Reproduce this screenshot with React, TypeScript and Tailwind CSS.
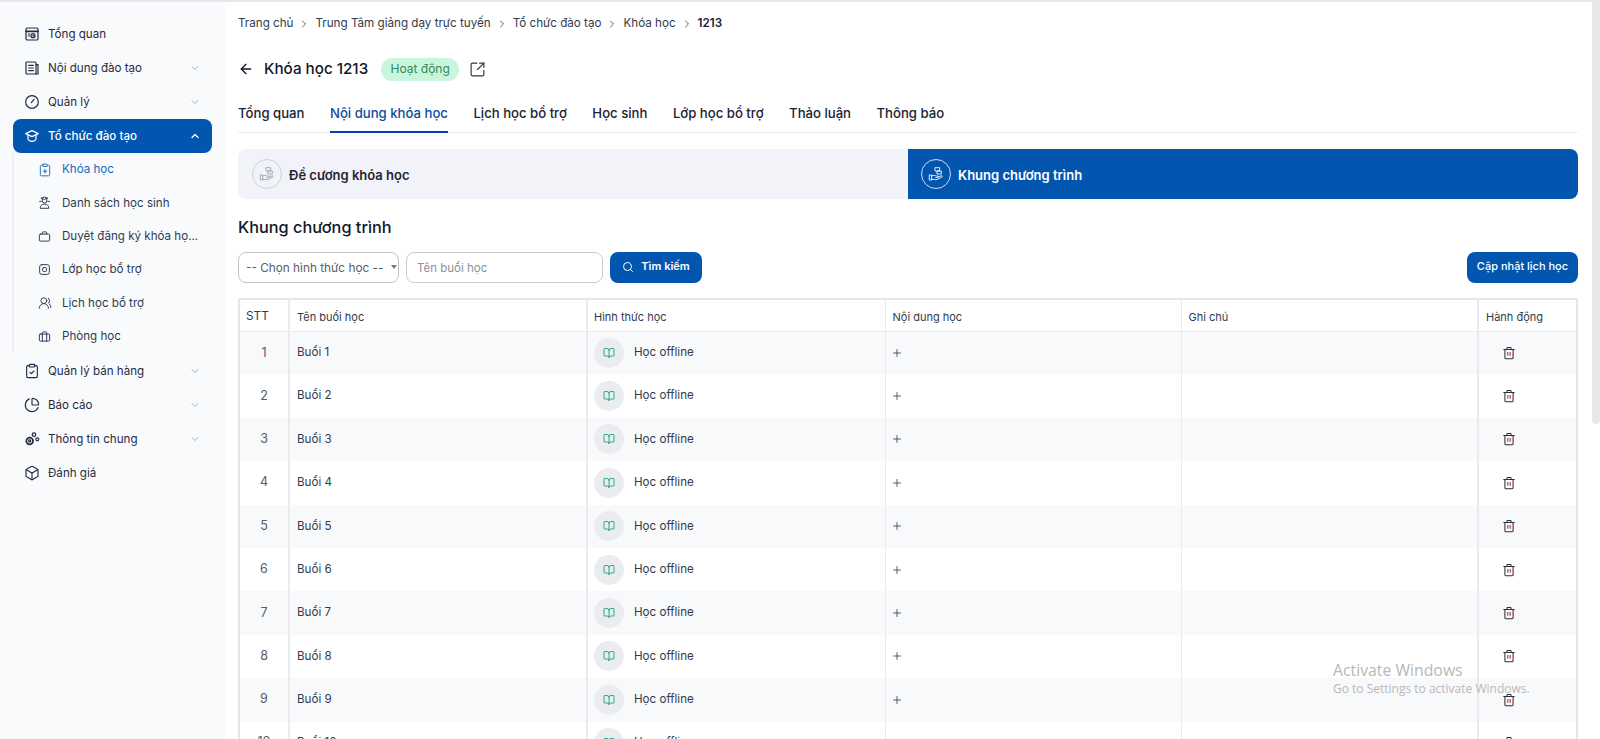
import {
    ArrowLeft,
    BookOpen,
    Box,
    ChartPie,
    ChevronDown,
    ChevronRight,
    ChevronUp,
    ClipboardCheck,
    ClipboardPlus,
    Plus,
    Search,
    SquareArrowOutUpRight,
    UsersRound,
} from 'lucide-react'
import type { ReactNode } from 'react'

// Hand-drawn icons (no match in lucide)
const Svg = ({ children, className }: { children: ReactNode; className: string }) => (
    <svg viewBox="0 0 24 24" fill="none" stroke="currentColor" strokeWidth="1.8" strokeLinecap="round" strokeLinejoin="round" className={className}>
        {children}
    </svg>
)

const OverviewIcon = () => (
    <Svg className="h-[16px] w-[16px]">
        <rect x="3" y="3" width="18" height="18" rx="2" />
        <path d="M3 8h18" strokeWidth="2.6" />
        <circle cx="13.5" cy="14.5" r="3" />
        <path d="M6.5 12h2M6.5 15h2M13.5 13.5v1l1 .6" />
    </Svg>
)
const ContentIcon = () => (
    <Svg className="h-[16px] w-[16px]">
        <rect x="3" y="3" width="15" height="18" rx="1.5" />
        <path d="M18 7h3v14h-3M7 8h7M7 12h7M7 16h7" />
    </Svg>
)
const GaugeIcon = () => (
    <Svg className="h-[16px] w-[16px]">
        <circle cx="12" cy="12" r="9.5" />
        <path d="M11 13l4-5" />
    </Svg>
)
const CapIcon = () => (
    <Svg className="h-[16px] w-[16px]">
        <path d="M12 4L2.5 8.5 12 13l9.5-4.5z" />
        <path d="M6 11v5c0 2 3 4 6 4s6-2 6-4v-5" />
    </Svg>
)
const StudentIcon = () => (
    <Svg className="h-[13px] w-[13px]">
        <path d="M6 4l6-2 6 2-6 2z" />
        <path d="M8 6v3a4 4 0 008 0V6" />
        <path d="M4 22c0-4 3-7 8-7s8 3 8 7z" />
        <path d="M3 10h3M18 10h3" />
    </Svg>
)
const BagIcon = () => (
    <Svg className="h-[13px] w-[13px]">
        <rect x="2.5" y="7.5" width="19" height="13" rx="2" />
        <path d="M8 7.5V5a1.5 1.5 0 011.5-1.5h5A1.5 1.5 0 0116 5v2.5" />
    </Svg>
)
const ClassIcon = () => (
    <Svg className="h-[13px] w-[13px]">
        <rect x="3" y="3" width="18" height="18" rx="4" />
        <rect x="8.5" y="8.5" width="7" height="7" rx="1.5" />
    </Svg>
)
const RoomIcon = () => (
    <Svg className="h-[13px] w-[13px]">
        <rect x="2.5" y="7.5" width="19" height="13" rx="1.5" />
        <path d="M8 20.5v-13M16 20.5v-13M8 7.5V5a1.5 1.5 0 011.5-1.5h5A1.5 1.5 0 0116 5v2.5" />
    </Svg>
)
const GearsIcon = () => (
    <Svg className="h-[16px] w-[16px]">
        <circle cx="8.5" cy="15" r="5" strokeDasharray="2.2 1" strokeWidth="2.6" />
        <circle cx="8.5" cy="15" r="1.6" />
        <circle cx="15" cy="5.5" r="2.6" />
        <circle cx="20" cy="12.5" r="2.2" />
    </Svg>
)
const HandBoxIcon = () => (
    <svg viewBox="0 0 24 24" fill="none" stroke="currentColor" strokeWidth="1.3" strokeLinecap="round" strokeLinejoin="round" className="h-full w-full">
        <rect x="11" y="2.5" width="6.5" height="5" />
        <rect x="14" y="7.5" width="6" height="4.5" />
        <path d="M2.5 13.5h3V21h-3zM5.5 15c3-1.8 5-1 7 0h2c1.5 0 1.5 2 0 2h-3M15 16.5l4.5-1.8c1.8-.6 2.5 1.1 1 2l-7 3.5c-2 .6-5 0-8-.5" />
    </svg>
)
const TrashIcon = () => (
    <svg viewBox="0 0 24 24" fill="none" strokeWidth="1.8" strokeLinecap="round" strokeLinejoin="round" className="h-[14px] w-[14px] stroke-[#2d2f3a]">
        <path d="M3 6h18M8.5 6V3.5a1 1 0 011-1h5a1 1 0 011 1V6" />
        <path d="M5 6v14a2 2 0 002 2h10a2 2 0 002-2V6" />
        <path d="M10 11v5" className="stroke-[#b4232f]" />
        <path d="M14 11v5" className="stroke-[#b4232f]" />
    </svg>
)

const mainMenuTop = [
    { label: 'Tổng quan', icon: <OverviewIcon />, arrow: false },
    { label: 'Nội dung đào tạo', icon: <ContentIcon />, arrow: true },
    { label: 'Quản lý', icon: <GaugeIcon />, arrow: true },
]

const subMenu = [
    { label: 'Khóa học', icon: <ClipboardPlus className="h-[14px] w-[14px]" strokeWidth={1.6} />, active: true },
    { label: 'Danh sách học sinh', icon: <StudentIcon /> },
    { label: 'Duyệt đăng ký khóa họ...', icon: <BagIcon /> },
    { label: 'Lớp học bổ trợ', icon: <ClassIcon /> },
    { label: 'Lịch học bổ trợ', icon: <UsersRound className="h-[14px] w-[14px]" strokeWidth={1.6} /> },
    { label: 'Phòng học', icon: <RoomIcon /> },
]

const mainMenuBottom = [
    { label: 'Quản lý bán hàng', icon: <ClipboardCheck className="h-[16px] w-[16px]" strokeWidth={1.7} />, arrow: true },
    { label: 'Báo cáo', icon: <ChartPie className="h-[16px] w-[16px]" strokeWidth={1.7} />, arrow: true },
    { label: 'Thông tin chung', icon: <GearsIcon />, arrow: true },
    { label: 'Đánh giá', icon: <Box className="h-[16px] w-[16px]" strokeWidth={1.7} />, arrow: false },
]

const crumbs = ['Trang chủ', 'Trung Tâm giảng dạy trực tuyến', 'Tổ chức đào tạo', 'Khóa học']
const tabs = ['Tổng quan', 'Nội dung khóa học', 'Lịch học bổ trợ', 'Học sinh', 'Lớp học bổ trợ', 'Thảo luận', 'Thông báo']
const sessions = [1, 2, 3, 4, 5, 6, 7, 8, 9, 10]

function MenuRow({ label, icon, arrow }: { label: string; icon: ReactNode; arrow: boolean }) {
    return (
        <div className="flex h-[34px] items-center pl-[24px] pr-[24px] text-[#1f2a44]">
            <span className="flex w-[24px] shrink-0">{icon}</span>
            <span className="flex-1 truncate pt-[2px]">{label}</span>
            {arrow && <ChevronDown className="h-3 w-3 text-[#a8afbb]" />}
        </div>
    )
}

export default function App() {
    return (
        <div className="flex h-[739px] overflow-hidden border-t-2 border-[#e6e7eb] bg-white font-['Inter',sans-serif] text-[12px]">
            {/* Sidebar */}
            <aside className="w-[225px] shrink-0 bg-[#f9fafc] pt-[15px] text-[11.6px]">
                {mainMenuTop.map((item) => (
                    <MenuRow key={item.label} {...item} />
                ))}
                <div className="mx-[13px] flex h-[34px] w-[199px] items-center rounded-lg bg-[#0256b0] pl-[11px] pr-[11px] font-medium text-white">
                    <span className="flex w-[24px] shrink-0"><CapIcon /></span>
                    <span className="flex-1 pt-[2px]">Tổ chức đào tạo</span>
                    <ChevronUp className="h-3 w-3" strokeWidth={2.5} />
                </div>
                <div className="ml-[12px] w-[200px] border-l-2 border-[#eceef1]">
                    {subMenu.map((item) => (
                        <div
                            key={item.label}
                            className={`flex h-[33.3px] items-center pl-[24px] ${item.active ? 'text-[#1769b8]' : 'text-[#2f3a52]'}`}
                        >
                            <span className="flex w-[24px] shrink-0">{item.icon}</span>
                            <span className="truncate pt-[1px]">{item.label}</span>
                        </div>
                    ))}
                </div>
                <div className="pt-[1px]">
                    {mainMenuBottom.map((item) => (
                        <MenuRow key={item.label} {...item} />
                    ))}
                </div>
            </aside>

            {/* Main */}
            <main className="min-w-0 flex-1 pl-[13px] pr-[14px] text-[#1a2233]">
                <nav className="mt-[14px] flex h-4 items-center text-[11.65px] text-[#333b4d]">
                    {crumbs.map((crumb) => (
                        <span key={crumb} className="flex items-center">
                            {crumb}
                            <ChevronRight className="mx-[5px] h-3 w-3" strokeWidth={1.6} />
                        </span>
                    ))}
                    <span className="font-semibold text-[#1a2233]">1213</span>
                </nav>

                <div className="mt-[25px] flex h-[24px] items-center">
                    <ArrowLeft className="h-[16px] w-[16px] text-[#111827]" strokeWidth={2} />
                    <h1 className="ml-[10px] text-[15.2px] font-medium text-[#111827]">Khóa học 1213</h1>
                    <span className="ml-[13px] flex h-[23px] w-[78px] items-center justify-center rounded-full bg-[#c9f5da] text-[12px] text-[#2f8a5d]">Hoạt động</span>
                    <SquareArrowOutUpRight className="ml-[10px] h-[17px] w-[17px] text-[#2d3344]" strokeWidth={1.6} />
                </div>

                <div className="mt-[18px] flex h-[34px] gap-[25.5px] border-b border-[#eceef1] text-[13.15px] font-medium">
                    {tabs.map((tab, i) => (
                        <div
                            key={tab}
                            className={`-mb-px pt-[5px] ${i === 1 ? 'border-b-2 border-[#0a3fa8] text-[#0f4c9c]' : 'text-[#1a2233]'}`}
                        >
                            {tab}
                        </div>
                    ))}
                </div>

                <div className="mt-[16px] grid h-[50px] grid-cols-2 text-[13px] font-semibold">
                    <div className="flex items-center gap-[7px] rounded-l-lg bg-[#f1f3f8] pl-[14px] text-[#1f2433]">
                        <span className="flex h-[30px] w-[30px] items-center justify-center rounded-full border border-[#cdd1d9] p-[6px] text-[#9aa0ad]"><HandBoxIcon /></span>
                        <span className="pt-[3px]">Đề cương khóa học</span>
                    </div>
                    <div className="flex items-center gap-[7px] rounded-r-lg bg-[#0256b0] pl-[13px] text-white">
                        <span className="flex h-[30px] w-[30px] items-center justify-center rounded-full border border-[#cfdcef] p-[6px]"><HandBoxIcon /></span>
                        <span className="pt-[3px]">Khung chương trình</span>
                    </div>
                </div>

                <h2 className="mt-[18px] text-[16.3px] font-medium leading-[20px] text-[#111827]">Khung chương trình</h2>

                <div className="mt-[15px] flex h-[31px] items-stretch gap-[7px]">
                    <div className="relative flex w-[161px] items-center rounded-lg border border-[#bfc3ca] pl-[7px] pt-[2px] text-[11.8px] text-[#555c6b]">
                        -- Chọn hình thức học --
                        <span className="absolute right-[1px] top-[12px] h-0 w-0 border-x-[3.5px] border-t-[4px] border-x-transparent border-t-[#777]" />
                    </div>
                    <input
                        placeholder="Tên buổi học"
                        className="w-[197px] rounded-lg border border-[#c9ccd2] px-[10px] pt-[2px] text-[11.5px] outline-none placeholder:text-[#8a909b]"
                    />
                    <button className="flex w-[92px] items-center justify-center gap-[7px] rounded-lg bg-[#0256b0] pb-[2px] text-[11px] font-semibold text-white">
                        <Search className="h-[12px] w-[12px]" strokeWidth={2} />
                        Tìm kiếm
                    </button>
                    <button className="ml-auto w-[111px] rounded-lg bg-[#0256b0] pb-[2px] text-[11px] font-medium text-white">Cập nhật lịch học</button>
                </div>

                <table className="mt-[15px] w-[1340px] table-fixed border-collapse border-2 border-[#e4e6ea] text-[11.6px] text-[#333b4d]">
                    <colgroup>
                        <col className="w-[50px]" />
                        <col className="w-[298px]" />
                        <col className="w-[298px]" />
                        <col className="w-[296px]" />
                        <col className="w-[297px]" />
                        <col />
                    </colgroup>
                    <thead>
                        <tr className="h-[32px] border-b border-[#e9ebef] text-left text-[11px]">
                            <th className="border-r-2 border-[#e9ebef] pl-[6px] pt-[3px] text-[11.8px] font-normal">STT</th>
                            <th className="border-r-2 border-[#e9ebef] pl-[7px] pt-[3px] font-normal">Tên buổi học</th>
                            <th className="border-r border-[#e9ebef] pl-[6px] pt-[3px] font-normal">Hình thức học</th>
                            <th className="border-r border-[#e9ebef] pl-[7px] pt-[3px] font-normal">Nội dung học</th>
                            <th className="border-r-2 border-[#e9ebef] pl-[7px] pt-[3px] font-normal">Ghi chú</th>
                            <th className="pl-[7px] pt-[3px] font-normal">Hành động</th>
                        </tr>
                    </thead>
                    <tbody>
                        {sessions.map((n) => (
                            <tr key={n} className={`h-[43.4px] ${n % 2 === 1 ? 'bg-[#f8f9fb]' : 'bg-white'}`}>
                                <td className="border-r-2 border-[#e9ebef] text-center align-middle text-[12.5px] text-[#555c6b]">{n}</td>
                                <td className="border-r-2 border-[#e9ebef] pl-[7px]">Buổi {n}</td>
                                <td className="border-r border-[#e9ebef] pl-[6px]">
                                    <div className="flex items-center gap-[10px]">
                                        <span className="flex h-[30px] w-[30px] items-center justify-center rounded-full bg-[#eaecef]">
                                            <BookOpen className="h-[12px] w-[12px] text-[#1aa37f]" strokeWidth={1.8} />
                                        </span>
                                        <span>Học offline</span>
                                    </div>
                                </td>
                                <td className="border-r border-[#e9ebef] pl-[5px]">
                                    <Plus className="h-[12px] w-[12px] text-[#3c4353]" strokeWidth={1.7} />
                                </td>
                                <td className="border-r-2 border-[#e9ebef]" />
                                <td className="pl-[23px]"><TrashIcon /></td>
                            </tr>
                        ))}
                    </tbody>
                </table>
            </main>

            {/* Scrollbar */}
            <div className="w-2 shrink-0 bg-white">
                <div className="h-[422px] rounded-b-md bg-[#e8e8e8]" />
            </div>

            {/* Windows watermark */}
            <div className="pointer-events-none absolute left-[1333px] top-[660px] font-['Open_Sans',sans-serif] text-[#b8b8b8]">
                <div className="text-[15.8px] leading-[20px]">Activate Windows</div>
                <div className="text-[12px] leading-[18px]">Go to Settings to activate Windows.</div>
            </div>
        </div>
    )
}
